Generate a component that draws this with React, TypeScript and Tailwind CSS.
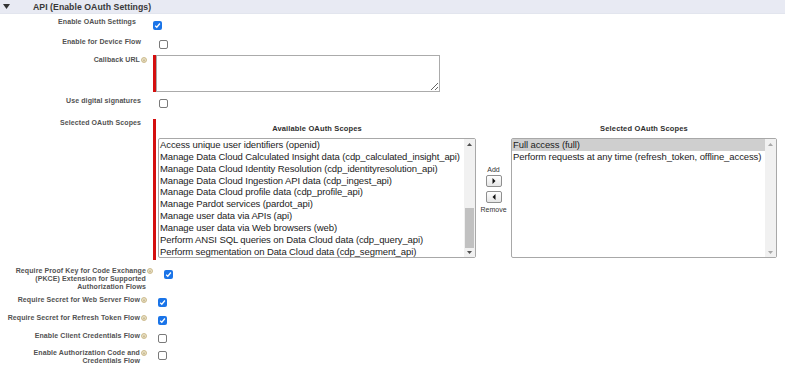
import React from "react";

const available = [
  "Access unique user identifiers (openid)",
  "Manage Data Cloud Calculated Insight data (cdp_calculated_insight_api)",
  "Manage Data Cloud Identity Resolution (cdp_identityresolution_api)",
  "Manage Data Cloud Ingestion API data (cdp_ingest_api)",
  "Manage Data Cloud profile data (cdp_profile_api)",
  "Manage Pardot services (pardot_api)",
  "Manage user data via APIs (api)",
  "Manage user data via Web browsers (web)",
  "Perform ANSI SQL queries on Data Cloud data (cdp_query_api)",
  "Perform segmentation on Data Cloud data (cdp_segment_api)",
];

const selected = [
  "Full access (full)",
  "Perform requests at any time (refresh_token, offline_access)",
];

const label = "text-[7px] font-bold leading-[8px] tracking-[0.1px] text-[#525252]";

function Info() {
  return (
    <svg width="6" height="6" viewBox="0 0 6 6" className="ml-[1px] mt-[1px] shrink-0">
      <circle cx="3" cy="3" r="2.5" fill="#ece3c8" stroke="#c2ad78" strokeWidth="0.8" />
      <rect x="2.6" y="2.5" width="0.8" height="1.8" fill="#9c8650" />
    </svg>
  );
}

function Checkbox({ checked }: { checked?: boolean }) {
  if (checked) {
    return (
      <span className="flex h-[9px] w-[9px] items-center justify-center rounded-[2px] bg-[#1a74e8]">
        <svg width="7" height="7" viewBox="0 0 7 7">
          <path d="M1.2 3.7 L2.8 5.2 L5.9 1.5" stroke="white" strokeWidth="1.3" fill="none" />
        </svg>
      </span>
    );
  }
  return <span className="block h-[9px] w-[9px] rounded-[2px] border border-[#7a7a7a] bg-white" />;
}

function Arrow({ up, color }: { up?: boolean; color: string }) {
  return (
    <svg width="5" height="3" viewBox="0 0 5 3">
      <polygon points={up ? "0,3 5,3 2.5,0" : "0,0 5,0 2.5,3"} fill={color} />
    </svg>
  );
}

function ListBox({ items, width, active, highlight }: { items: string[]; width: string; active?: boolean; highlight?: number }) {
  return (
    <div className={`flex h-[120px] ${width} rounded-[2px] border border-[#a8a8a8] bg-white`}>
      <div className="flex-1 overflow-hidden">
        {items.map((it, i) => (
          <div
            key={it}
            className={`whitespace-nowrap pl-[1px] text-[9.5px] leading-[11.85px] tracking-[-0.1px] text-[#1c1c1c] ${
              i === highlight ? "bg-[#cfcfcf]" : ""
            }`}
          >
            {it}
          </div>
        ))}
      </div>
      <div className="flex w-[11px] flex-col bg-[#f1f1f1]">
        <div className="flex h-[11px] items-center justify-center">
          <Arrow up color={active ? "#505050" : "#a8a8a8"} />
        </div>
        <div className="flex flex-1 flex-col justify-end px-[1px]">
          {active && <div className="h-[40px] bg-[#c1c1c1]" />}
        </div>
        <div className="flex h-[9px] items-center justify-center">
          <Arrow color={active ? "#505050" : "#a8a8a8"} />
        </div>
      </div>
    </div>
  );
}

function MoveButton({ right }: { right?: boolean }) {
  return (
    <div className="flex h-[12px] w-[16px] items-center justify-center rounded-[2px] border border-[#8f8f8f] bg-linear-to-b from-white to-[#e6e6e6]">
      <svg width="4" height="6" viewBox="0 0 4 6">
        <polygon points={right ? "0.5,0 3.5,3 0.5,6" : "3.5,0 0.5,3 3.5,6"} fill="#111" />
      </svg>
    </div>
  );
}

export default function App() {
  return (
    <div className="h-[370px] w-[785px] overflow-hidden bg-white font-['Liberation_Sans',Arial,sans-serif]">
      {/* section header */}
      <div className="flex h-[14px] items-center border-b border-[#e2e5ee] bg-[#e8eaf3]">
        <svg width="7" height="5" viewBox="0 0 7 5" className="ml-[3px]">
          <polygon points="0,0 7,0 3.5,5" fill="#333" />
        </svg>
        <span className="ml-[23px] text-[8.7px] font-bold leading-[12px] tracking-[0.05px] text-[#383838]">
          API (Enable OAuth Settings)
        </span>
      </div>

      {/* Enable OAuth Settings */}
      <div className="mt-[4px] flex h-[20px]">
        <div className={`w-[153px] shrink-0 pr-[17px] text-right ${label}`}>Enable OAuth Settings</div>
        <div className="pt-[3px]">
          <Checkbox checked />
        </div>
      </div>

      {/* Device flow */}
      <div className="flex h-[17px]">
        <div className={`w-[153px] shrink-0 pr-[12px] text-right ${label}`}>Enable for Device Flow</div>
        <div className="ml-[6px] pt-[2px]">
          <Checkbox />
        </div>
      </div>

      {/* Callback URL */}
      <div className="flex h-[42px]">
        <div className="flex w-[153px] shrink-0 justify-end pr-[6px] pt-[0.5px]">
          <span className={label}>Callback URL</span>
          <Info />
        </div>
        <div className="flex">
          <div className="h-[37px] w-[3px] bg-[#d40f0f]" />
          <textarea
            readOnly
            className="h-[37px] w-[284px] resize border border-[#ababab] bg-white outline-none"
          />
        </div>
      </div>

      {/* Digital signatures */}
      <div className="flex h-[22px]">
        <div className={`w-[153px] shrink-0 pr-[12px] text-right ${label}`}>Use digital signatures</div>
        <div className="ml-[6px] pt-[2px]">
          <Checkbox />
        </div>
      </div>

      {/* Scopes */}
      <div className="flex h-[148px]">
        <div className={`w-[153px] shrink-0 pr-[12px] text-right ${label}`}>Selected OAuth Scopes</div>
        <div className="flex">
          <div className="h-[141px] w-[3px] bg-[#d40f0f]" />
          <div className="ml-[2px] flex w-[318px] flex-col">
            <div className="h-[19px] pt-[6px] text-center text-[7.5px] font-bold leading-[8px] tracking-[0.15px] text-[#2e2e2e]">
              Available OAuth Scopes
            </div>
            <ListBox items={available} width="w-[318px]" active />
          </div>
          <div className="flex w-[35px] flex-col items-center pt-[47px] text-[7px] leading-[8px] text-[#333]">
            <span>Add</span>
            <div className="mt-[1px]">
              <MoveButton right />
            </div>
            <div className="mt-[4px]">
              <MoveButton />
            </div>
            <span className="mt-[3px]">Remove</span>
          </div>
          <div className="flex w-[266px] flex-col">
            <div className="h-[19px] pt-[6px] text-center text-[7.5px] font-bold leading-[8px] tracking-[0.15px] text-[#2e2e2e]">
              Selected OAuth Scopes
            </div>
            <ListBox items={selected} width="w-[266px]" highlight={0} />
          </div>
        </div>
      </div>

      {/* PKCE */}
      <div className="flex h-[29px]">
        <div className="flex w-[153px] shrink-0 justify-end">
          <span className={`text-right ${label}`}>
            Require Proof Key for Code Exchange
            <br />
            (PKCE) Extension for Supported
            <br />
            Authorization Flows
          </span>
          <Info />
        </div>
        <div className="ml-[11px] pt-[3px]">
          <Checkbox checked />
        </div>
      </div>

      {[
        { t: "Require Secret for Web Server Flow", c: true, h: "h-[18px]" },
        { t: "Require Secret for Refresh Token Flow", c: true, h: "h-[18px]" },
        { t: "Enable Client Credentials Flow", c: false, h: "h-[17px]" },
      ].map((r) => (
        <div key={r.t} className={`flex ${r.h}`}>
          <div className="flex w-[153px] shrink-0 justify-end pr-[6px]">
            <span className={label}>{r.t}</span>
            <Info />
          </div>
          <div className="ml-[5px] pt-[2px]">
            <Checkbox checked={r.c} />
          </div>
        </div>
      ))}

      {/* Authorization code */}
      <div className="flex h-[20px]">
        <div className="flex w-[153px] shrink-0 justify-end pr-[6px]">
          <span className={`text-right ${label}`}>
            Enable Authorization Code and
            <br />
            Credentials Flow
          </span>
          <Info />
        </div>
        <div className="ml-[5px] pt-[2px]">
          <Checkbox />
        </div>
      </div>
    </div>
  );
}
